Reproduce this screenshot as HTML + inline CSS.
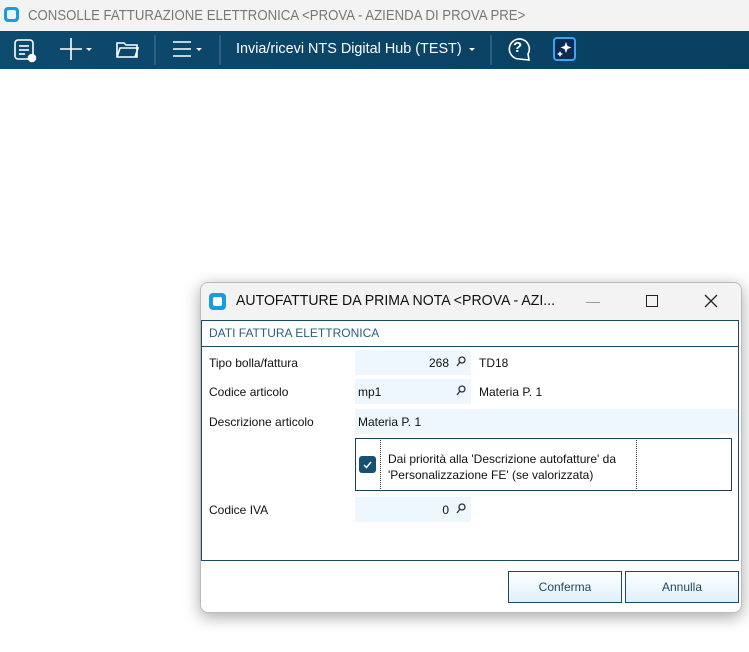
<!DOCTYPE html>
<html><head><style>
body{margin:0;width:749px;height:652px;background:#fff;position:relative;overflow:hidden;font-family:"Liberation Sans",sans-serif;}
.a{position:absolute}
.t{font-size:12px;color:#111}
.inp{position:absolute;background:#eef7fd;font-size:12px;color:#111;box-sizing:border-box;padding-top:6px}
</style></head><body>
<div class="a" style="left:0;top:0;width:749px;height:31px;background:#f3f3f3"></div>
<div class="a" style="left:4px;top:7px;width:15px;height:15px;background:#1a9be0;border-radius:4px"><div style="margin:3px;width:9px;height:9px;background:#fff;border-radius:2px;opacity:.9"></div></div>
<div class="a" style="left:28px;top:7px;font-size:15px;color:#777;transform:scaleX(0.88);transform-origin:0 0;white-space:nowrap">CONSOLLE FATTURAZIONE ELETTRONICA &lt;PROVA - AZIENDA DI PROVA PRE&gt;</div>
<div class="a" style="left:0;top:31px;width:749px;height:38px;background:linear-gradient(90deg,#0c4a6e,#0a3f60)"></div>
<svg class="a" style="left:0;top:31px" width="749" height="38" fill="none" stroke="#fff" stroke-width="1.6">
<rect x="15" y="9" width="18" height="19" rx="3"/><line x1="19" y1="15" x2="29" y2="15"/><line x1="19" y1="19" x2="29" y2="19"/><line x1="19" y1="23" x2="25" y2="23"/><circle cx="32" cy="27" r="3.5" fill="#fff"/>
<line x1="60" y1="18" x2="82" y2="18"/><line x1="71" y1="7" x2="71" y2="29"/><path d="M86 17l3 3 3-3z" fill="#fff" stroke="none"/>
<path d="M117 26V12h7l2 2h11v12zM117 26l3-9h18l-3 9" />
<line x1="155" y1="4" x2="155" y2="34" stroke="#4d7a96" stroke-width="1"/>
<line x1="173" y1="11" x2="191" y2="11"/><line x1="173" y1="18" x2="191" y2="18"/><line x1="173" y1="25" x2="191" y2="25"/><path d="M196 17l3 3 3-3z" fill="#fff" stroke="none"/>
<line x1="220" y1="4" x2="220" y2="34" stroke="#4d7a96" stroke-width="1"/>
<path d="M469 17l3 3 3-3z" fill="#fff" stroke="none"/>
<line x1="491" y1="4" x2="491" y2="34" stroke="#4d7a96" stroke-width="1"/>
<path d="M519 28a10 10 0 1 1 9-5l1 6z"/>
<rect x="554" y="7" width="21" height="22" rx="3" fill="#0c2a52" stroke="#3aa6f0" stroke-width="2"/>
<path d="M566 11l1.5 4 4 1.5-4 1.5-1.5 4-1.5-4-4-1.5 4-1.5z M560 20l1 2 2 1-2 1-1 2-1-2-2-1 2-1z" fill="#fff" stroke="none"/>
</svg>
<div class="a" style="left:513px;top:39px;font-size:15px;color:#fff;font-weight:bold">?</div>
<div class="a" style="left:236px;top:40px;font-size:15px;color:#fff;transform:scaleX(0.96);transform-origin:0 0;white-space:nowrap">Invia/ricevi NTS Digital Hub (TEST)</div>

<div class="a" style="left:200px;top:282px;width:540px;height:329px;background:#fff;border:1px solid #bbb;border-radius:8px;box-shadow:0 4px 16px rgba(0,0,0,.35);overflow:hidden">
<div class="a" style="left:0;top:0;width:540px;height:37px;background:#f3f3f3"></div>
<div class="a" style="left:8px;top:10px;width:17px;height:17px;background:#1a9be0;border-radius:4px"><div style="margin:4px;width:9px;height:9px;background:#fff;border-radius:2px"></div></div>
<div class="a" style="left:35px;top:9px;font-size:15px;color:#111;transform:scaleX(0.94);transform-origin:0 0;white-space:nowrap">AUTOFATTURE DA PRIMA NOTA &lt;PROVA - AZI...</div>
<div class="a" style="left:385px;top:19px;width:14px;height:1px;background:#999"></div>
<div class="a" style="left:445px;top:12px;width:10px;height:10px;border:1.5px solid #222"></div>
<svg class="a" style="left:503px;top:11px" width="14" height="14"><path d="M1 1L13 13M13 1L1 13" stroke="#222" stroke-width="1.3"/></svg>
<div class="a" style="left:0;top:37px;width:536px;height:239px;border:1px solid #1d4a62"></div>
<div class="a" style="left:8px;top:43px;font-size:12px;color:#2a5f80">DATI FATTURA ELETTRONICA</div>
<div class="a" style="left:1px;top:63px;width:537px;height:1px;background:#1d4a62"></div>
<div class="a t" style="left:8px;top:73px">Tipo bolla/fattura</div>
<div class="inp" style="left:154px;top:67px;width:116px;height:25px;text-align:right;padding-right:22px">268</div>
<div class="a t" style="left:278px;top:73px">TD18</div>
<div class="a t" style="left:8px;top:102px">Codice articolo</div>
<div class="inp" style="left:154px;top:96px;width:116px;height:25px;padding-left:3px">mp1</div>
<div class="a t" style="left:278px;top:102px">Materia P. 1</div>
<div class="a t" style="left:8px;top:132px">Descrizione articolo</div>
<div class="inp" style="left:154px;top:126px;width:383px;height:25px;padding-left:3px">Materia P. 1</div>
<div class="a" style="left:154px;top:155px;width:375px;height:51px;border:1.5px solid #1d3f52"></div>
<div class="a" style="left:158px;top:173px;width:17px;height:17px;background:#165172;border-radius:3px"><svg width="17" height="17"><path d="M5 9l2.5 2.5L12 6" stroke="#fff" stroke-width="1.5" fill="none"/></svg></div>
<div class="a" style="left:179px;top:157px;width:255px;height:49px;border:1px dotted #333;border-top:none;border-bottom:none"></div>
<div class="a t" style="left:187px;top:168px;line-height:16px">Dai priorità alla 'Descrizione autofatture' da<br>'Personalizzazione FE' (se valorizzata)</div>
<div class="a t" style="left:8px;top:220px">Codice IVA</div>
<div class="inp" style="left:154px;top:214px;width:116px;height:25px;text-align:right;padding-right:22px">0</div>
<div class="a" style="left:307px;top:288px;width:112px;height:30px;border:1px solid #1d4a62;background:linear-gradient(#fff,#dff0fb);font-size:12px;color:#1d4a62;text-align:center;line-height:30px">Conferma</div>
<div class="a" style="left:424px;top:288px;width:112px;height:30px;border:1px solid #1d4a62;background:linear-gradient(#fff,#dff0fb);font-size:12px;color:#1d4a62;text-align:center;line-height:30px">Annulla</div>
</div>
<svg class="a" style="left:0;top:0" width="749" height="652" fill="none" stroke="#333" stroke-width="1.3">
<circle cx="462" cy="360" r="3"/><line x1="460" y1="362" x2="457" y2="366"/>
<circle cx="462" cy="389" r="3"/><line x1="460" y1="391" x2="457" y2="395"/>
<circle cx="462" cy="507" r="3"/><line x1="460" y1="509" x2="457" y2="513"/>
</svg>
</body></html>
